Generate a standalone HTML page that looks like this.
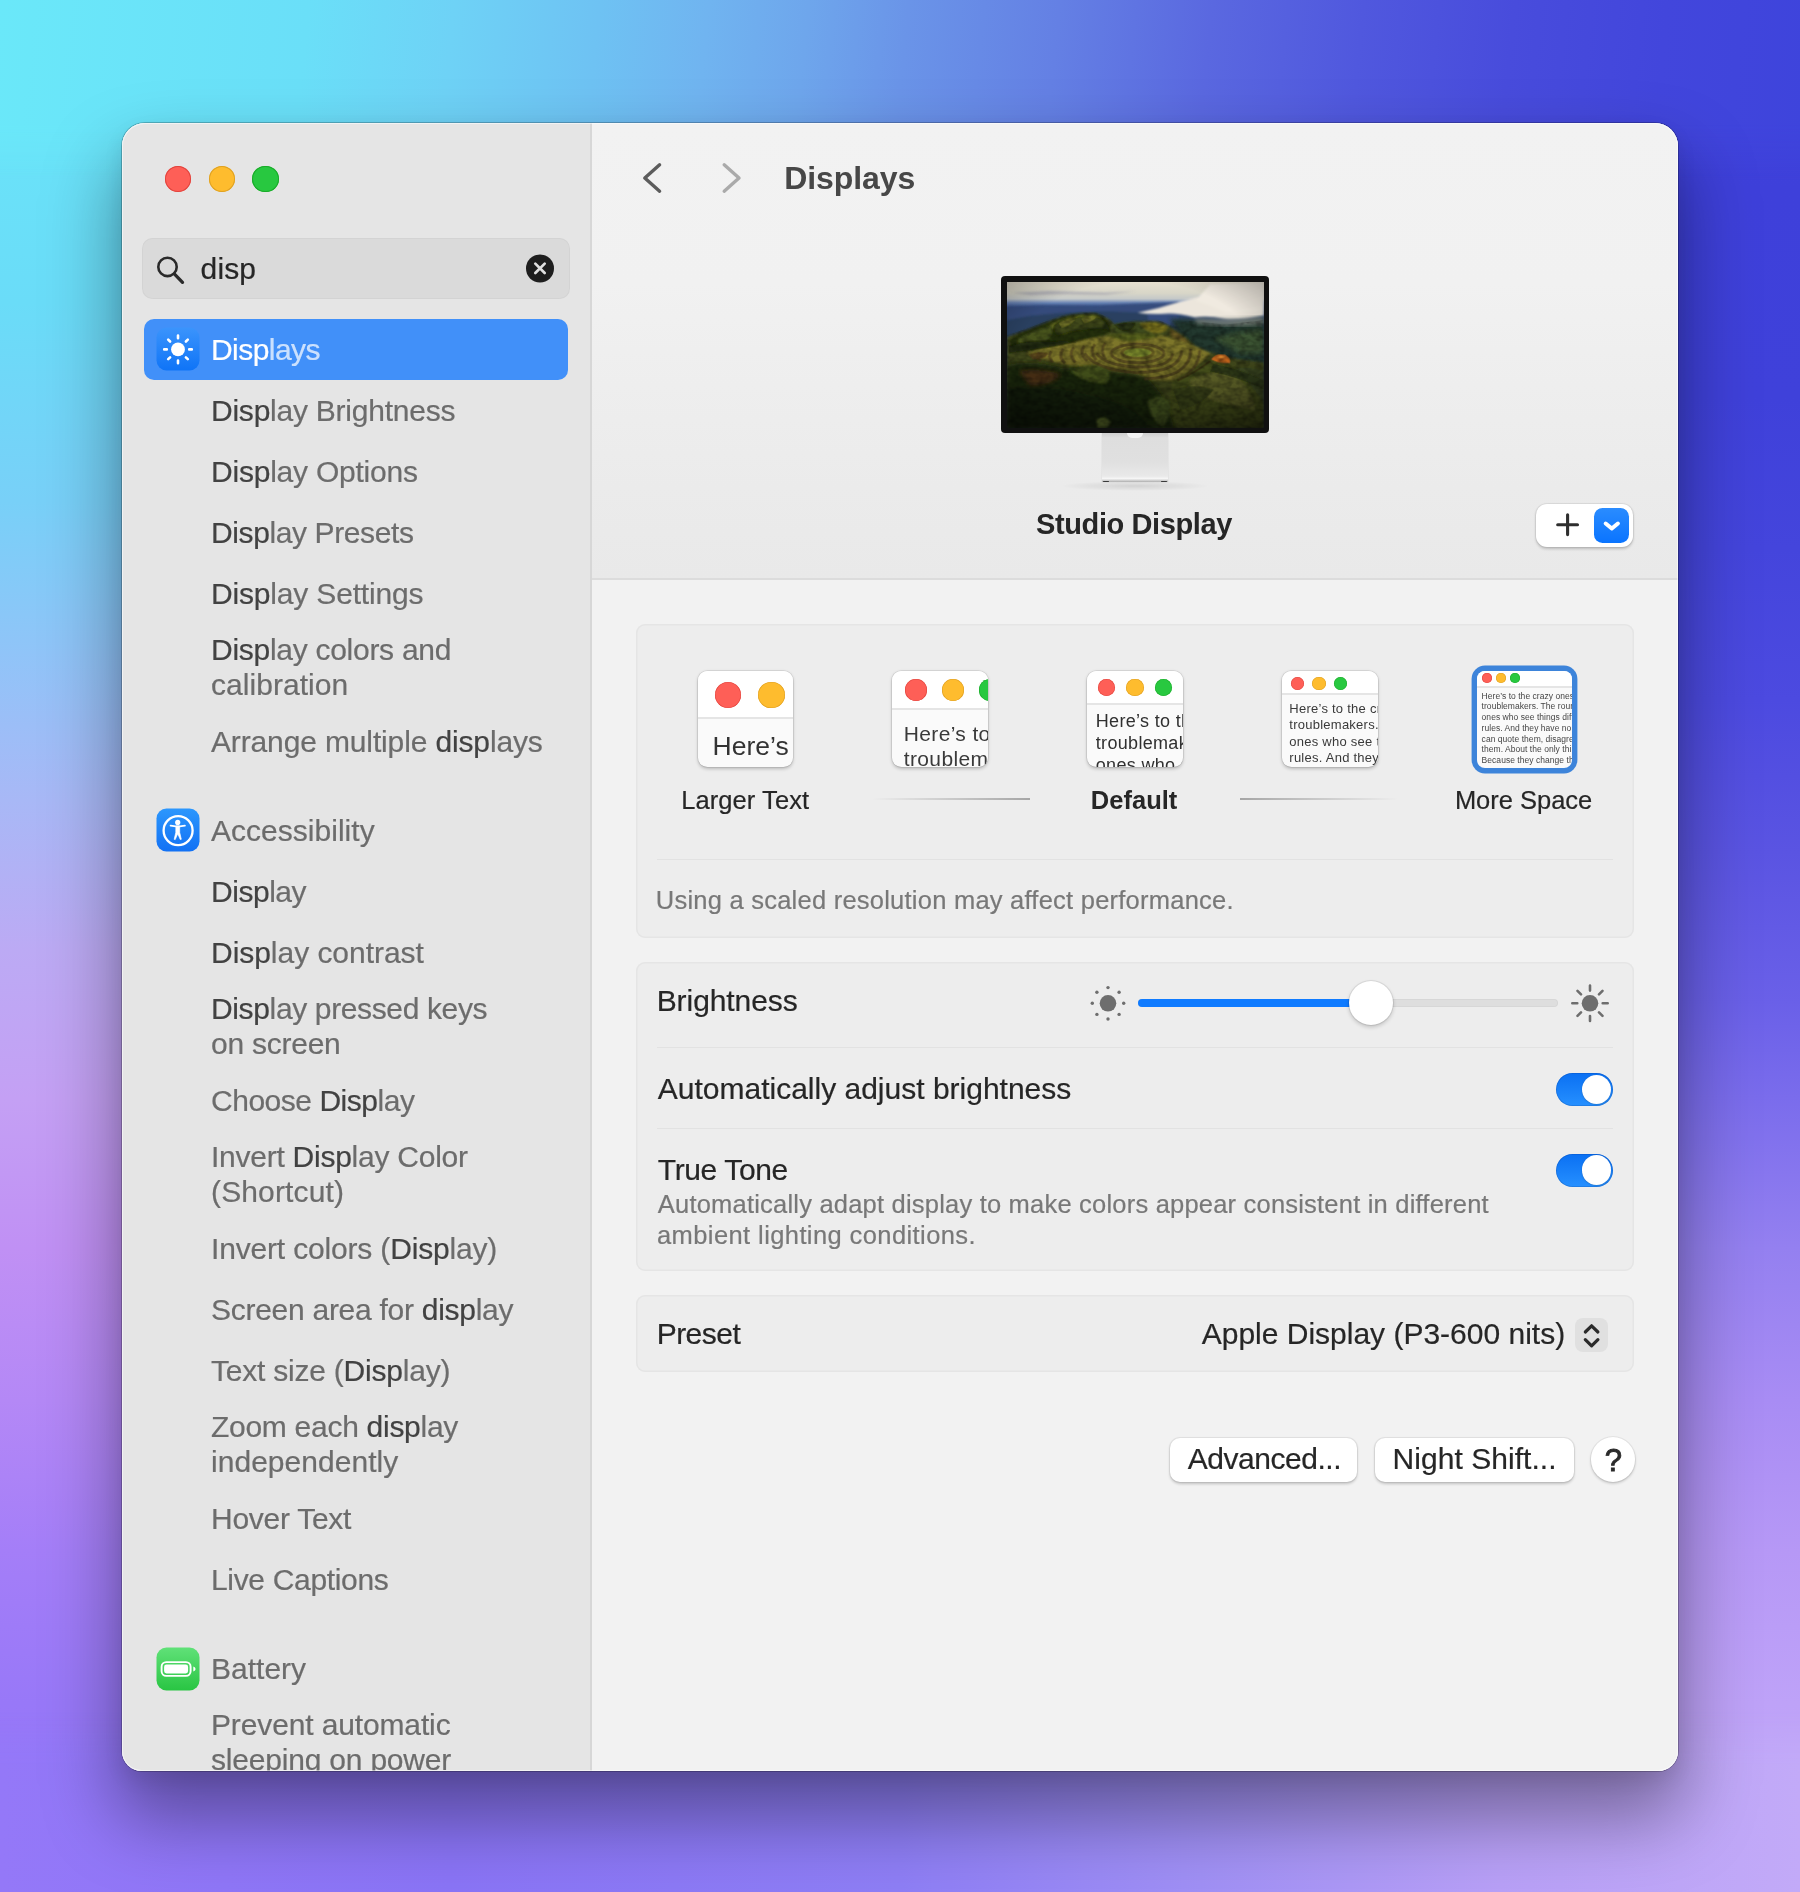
<!DOCTYPE html>
<html><head><meta charset="utf-8"><title>Displays</title>
<style>
html,body{margin:0;padding:0}
body{width:1800px;height:1892px;overflow:hidden;position:relative;font-family:"Liberation Sans",sans-serif;background:#8c78f0}
.bgA,.bgB,.bgT,.bgBt{position:absolute;left:0;top:0;width:1800px;height:1892px}
.bgA{background:linear-gradient(to bottom,#6ae8f9 0%,#6adcf8 16%,#78d0f8 26.5%,#90c4f8 34.5%,#a8b8f6 42.3%,#bcaaf4 50.2%,#c4a0f4 58.1%,#c090f4 66%,#b488f6 74%,#a47ef8 82%,#9878f8 90%,#9277f8 100%)}
.bgB{background:linear-gradient(to bottom,#4244dc 0%,#3e40da 10%,#3f41da 21%,#4445dc 29%,#4c4ae0 37%,#5a54e2 45%,#6a60e8 53%,#7a6cec 58%,#9480f0 66%,#a88cf4 74%,#b698f6 82%,#bea2f8 90%,#c2aaf8 100%);
 -webkit-mask-image:linear-gradient(to right,transparent 6%,rgba(0,0,0,.5) 50%,#000 94%);mask-image:linear-gradient(to right,transparent 6%,rgba(0,0,0,.5) 50%,#000 94%)}
.bgT{height:180px;background:linear-gradient(96deg,#6ae8f9 0%,#6adff8 17%,#6ed2f6 25%,#6ec2f3 33%,#70b4f0 39%,#6ea6ec 44.5%,#6a94e8 50%,#6480e4 58.3%,#5a68e0 66.7%,#5058de 75%,#484cdc 83.3%,#4246dc 91.7%,#3e44dc 100%);
 -webkit-mask-image:linear-gradient(to bottom,#000 0,#000 125px,transparent 180px);mask-image:linear-gradient(to bottom,#000 0,#000 125px,transparent 180px)}
.bgBt{top:1712px;height:180px;background:linear-gradient(to right,#9478f8 0%,#8a74f6 25%,#8e7ef5 50%,#a090f5 66.7%,#b8a0f7 83.3%,#c2aaf8 100%);
 -webkit-mask-image:linear-gradient(to top,#000 0,#000 125px,transparent 180px);mask-image:linear-gradient(to top,#000 0,#000 125px,transparent 180px)}
.win{position:absolute;left:122px;top:123px;width:1556px;height:1648px;border-radius:23px 23px 20px 20px;
 box-shadow:0 0 0 1px rgba(0,0,0,.22),0 42px 72px 6px rgba(0,0,0,.37),0 8px 20px rgba(0,0,0,.08)}
.clip{position:absolute;left:0;top:0;width:1556px;height:1648px;border-radius:23px 23px 20px 20px;overflow:hidden;background:#f2f2f2}
.hl{position:absolute;left:0;top:0;width:1556px;height:1648px;border-radius:23px 23px 20px 20px;box-shadow:inset 0 0 0 1px rgba(255,255,255,.55);pointer-events:none}
.pg{position:absolute;left:-122px;top:-123px;width:1800px;height:1892px;will-change:transform}
.t{position:absolute;white-space:pre;line-height:1em}
.r{-webkit-text-stroke:0.2px}
.a{position:absolute}
.panel{position:absolute;left:636px;width:998px;background:#ededed;border-radius:9px;box-shadow:inset 0 0 0 1.5px #e5e5e5}
.hr{position:absolute;height:1.6px;background:#e2e2e2}
.tl{position:absolute;border-radius:50%}
.thumb{position:absolute;width:96px;height:96px;border-radius:9.5px;background:#fafafa;overflow:hidden;
  box-shadow:0 0 0 .8px rgba(0,0,0,.09),0 1.5px 3.5px rgba(0,0,0,.22)}
.thumb .bar{position:absolute;left:0;top:0;width:100%;background:#fff;border-bottom:2px solid #e5e5e5}
.thumb .d{position:absolute;border-radius:50%}
.thumb .tx{position:absolute;white-space:pre;color:#3c3c3c}
.btn{position:absolute;background:#fff;border-radius:10px;box-shadow:0 0 0 1px rgba(0,0,0,.05),0 1.5px 3px rgba(0,0,0,.20)}
.tog{position:absolute;width:57.2px;height:33.2px;border-radius:17px;background:linear-gradient(to bottom,#0a70f3,#2690ff);box-shadow:inset 0 0 0 .8px rgba(0,40,120,.22)}
.tog i{position:absolute;right:1.7px;top:1.9px;width:29.5px;height:29.5px;border-radius:50%;background:#fff;box-shadow:0 .5px 1.5px rgba(0,0,0,.25)}
</style></head><body>
<div class="bgA"></div><div class="bgB"></div><div class="bgT"></div><div class="bgBt"></div>
<div class="win"><div class="clip"><div class="pg">
<div class="a" style="left:122px;top:123px;width:469px;height:1648px;background:#e5e5e5"></div>
<div class="a" style="left:590px;top:123px;width:1.6px;height:1648px;background:#d7d7d7"></div>
<div class="tl" style="left:165.1px;top:165.6px;width:26.4px;height:26.4px;background:#fe5f57;box-shadow:inset 0 0 0 1px #e0443e"></div>
<div class="tl" style="left:208.7px;top:165.6px;width:26.4px;height:26.4px;background:#febc2e;box-shadow:inset 0 0 0 1px #dea123"></div>
<div class="tl" style="left:252.3px;top:165.6px;width:26.4px;height:26.4px;background:#28c840;box-shadow:inset 0 0 0 1px #1aab29"></div>
<div class="a" style="left:142px;top:238.2px;width:428.2px;height:60.4px;border-radius:10.5px;background:#dadada;box-shadow:inset 0 0 0 1px rgba(0,0,0,.03)"></div>
<svg class="a" style="left:150px;top:250px" width="40" height="40" viewBox="0 0 40 40"><circle cx="17.5" cy="16.9" r="9.2" fill="none" stroke="#2a2a2a" stroke-width="2.6"/><path d="M24.3 23.9 L32.5 32.3" stroke="#2a2a2a" stroke-width="3.3" stroke-linecap="round"/></svg>
<div class="t r" style="left:200.60px;top:254.00px;font-size:30px;letter-spacing:0.138px;font-weight:400;"><span style="color:#262626">disp</span></div>
<svg class="a" style="left:525px;top:254px" width="30" height="30" viewBox="0 0 30 30"><circle cx="15" cy="14.5" r="14" fill="#1e1e1e"/><path d="M10.3 9.6 L19.7 19 M19.7 9.6 L10.3 19" stroke="#e0e0e0" stroke-width="2.7" stroke-linecap="round"/></svg>
<div class="a" style="left:144px;top:318.8px;width:424px;height:61px;border-radius:10px;background:#4190f9"></div>
<svg class="a" style="left:156.3px;top:327.3px" width="44" height="46" viewBox="0 0 44 46">
<defs><linearGradient id="gb" x1="0" y1="0" x2="0" y2="1"><stop offset="0" stop-color="#3b94fc"/><stop offset="1" stop-color="#0f74f7"/></linearGradient></defs>
<rect x="0.5" y="0.5" width="43" height="43" rx="10" fill="url(#gb)"/>
<circle cx="22" cy="22.4" r="6.9" fill="#fff"/>
<g stroke="#fff" stroke-width="2.6" stroke-linecap="round">
<path d="M22 8.6v2.6M22 33.6v2.6M8.2 22.4h2.6M33.2 22.4h2.6M12.2 12.6l1.9 1.9M29.9 30.3l1.9 1.9M31.8 12.6l-1.9 1.9M14.1 30.3l-1.9 1.9"/></g></svg>
<div class="t r" style="left:211.00px;top:335.00px;font-size:30px;letter-spacing:-0.547px;font-weight:400;"><span style="color:#ffffff">Disp</span><span style="color:rgba(255,255,255,.72)">lays</span></div>
<div class="t r" style="left:211.00px;top:396.00px;font-size:30px;letter-spacing:-0.235px;font-weight:400;"><span style="color:#424242">Disp</span><span style="color:#6c6c6c">lay Brightness</span></div>
<div class="t r" style="left:211.00px;top:457.00px;font-size:30px;letter-spacing:-0.226px;font-weight:400;"><span style="color:#424242">Disp</span><span style="color:#6c6c6c">lay Options</span></div>
<div class="t r" style="left:211.00px;top:518.00px;font-size:30px;letter-spacing:-0.394px;font-weight:400;"><span style="color:#424242">Disp</span><span style="color:#6c6c6c">lay Presets</span></div>
<div class="t r" style="left:211.00px;top:579.00px;font-size:30px;letter-spacing:-0.176px;font-weight:400;"><span style="color:#424242">Disp</span><span style="color:#6c6c6c">lay Settings</span></div>
<div class="t r" style="left:211.00px;top:635.00px;font-size:30px;letter-spacing:-0.279px;font-weight:400;"><span style="color:#424242">Disp</span><span style="color:#6c6c6c">lay colors and</span></div>
<div class="t r" style="left:211.00px;top:670.00px;font-size:30px;letter-spacing:0.050px;font-weight:400;"><span style="color:#6c6c6c">calibration</span></div>
<div class="t r" style="left:211.00px;top:727.00px;font-size:30px;letter-spacing:-0.138px;font-weight:400;"><span style="color:#6c6c6c">Arrange multiple </span><span style="color:#424242">disp</span><span style="color:#6c6c6c">lays</span></div>
<div class="t r" style="left:211.00px;top:816.00px;font-size:30px;letter-spacing:0.025px;font-weight:400;"><span style="color:#6c6c6c">Accessibility</span></div>
<div class="t r" style="left:211.00px;top:877.00px;font-size:30px;letter-spacing:-0.468px;font-weight:400;"><span style="color:#424242">Disp</span><span style="color:#6c6c6c">lay</span></div>
<div class="t r" style="left:211.00px;top:938.00px;font-size:30px;letter-spacing:-0.039px;font-weight:400;"><span style="color:#424242">Disp</span><span style="color:#6c6c6c">lay contrast</span></div>
<div class="t r" style="left:211.00px;top:994.00px;font-size:30px;letter-spacing:-0.363px;font-weight:400;"><span style="color:#424242">Disp</span><span style="color:#6c6c6c">lay pressed keys</span></div>
<div class="t r" style="left:211.00px;top:1029.00px;font-size:30px;letter-spacing:-0.250px;font-weight:400;"><span style="color:#6c6c6c">on screen</span></div>
<div class="t r" style="left:211.00px;top:1086.00px;font-size:30px;letter-spacing:-0.479px;font-weight:400;"><span style="color:#6c6c6c">Choose </span><span style="color:#424242">Disp</span><span style="color:#6c6c6c">lay</span></div>
<div class="t r" style="left:211.00px;top:1142.00px;font-size:30px;letter-spacing:-0.253px;font-weight:400;"><span style="color:#6c6c6c">Invert </span><span style="color:#424242">Disp</span><span style="color:#6c6c6c">lay Color</span></div>
<div class="t r" style="left:211.00px;top:1177.00px;font-size:30px;letter-spacing:0.138px;font-weight:400;"><span style="color:#6c6c6c">(Shortcut)</span></div>
<div class="t r" style="left:211.00px;top:1234.00px;font-size:30px;letter-spacing:-0.169px;font-weight:400;"><span style="color:#6c6c6c">Invert colors (</span><span style="color:#424242">Disp</span><span style="color:#6c6c6c">lay)</span></div>
<div class="t r" style="left:211.00px;top:1295.00px;font-size:30px;letter-spacing:-0.274px;font-weight:400;"><span style="color:#6c6c6c">Screen area for </span><span style="color:#424242">disp</span><span style="color:#6c6c6c">lay</span></div>
<div class="t r" style="left:211.00px;top:1356.00px;font-size:30px;letter-spacing:-0.221px;font-weight:400;"><span style="color:#6c6c6c">Text size (</span><span style="color:#424242">Disp</span><span style="color:#6c6c6c">lay)</span></div>
<div class="t r" style="left:211.00px;top:1412.00px;font-size:30px;letter-spacing:-0.282px;font-weight:400;"><span style="color:#6c6c6c">Zoom each </span><span style="color:#424242">disp</span><span style="color:#6c6c6c">lay</span></div>
<div class="t r" style="left:211.00px;top:1447.00px;font-size:30px;letter-spacing:0.036px;font-weight:400;"><span style="color:#6c6c6c">independently</span></div>
<div class="t r" style="left:211.00px;top:1504.00px;font-size:30px;letter-spacing:-0.274px;font-weight:400;"><span style="color:#6c6c6c">Hover Text</span></div>
<div class="t r" style="left:211.00px;top:1565.00px;font-size:30px;letter-spacing:-0.329px;font-weight:400;"><span style="color:#6c6c6c">Live Captions</span></div>
<div class="t r" style="left:211.00px;top:1654.00px;font-size:30px;letter-spacing:0.008px;font-weight:400;"><span style="color:#6c6c6c">Battery</span></div>
<div class="t r" style="left:211.00px;top:1710.00px;font-size:30px;letter-spacing:-0.135px;font-weight:400;"><span style="color:#6c6c6c">Prevent automatic</span></div>
<div class="t r" style="left:211.00px;top:1745.00px;font-size:30px;letter-spacing:-0.201px;font-weight:400;"><span style="color:#6c6c6c">sleeping on power</span></div>
<svg class="a" style="left:156.2px;top:808.1px" width="44" height="46" viewBox="0 0 44 46">
<defs><linearGradient id="gb2" x1="0" y1="0" x2="0" y2="1"><stop offset="0" stop-color="#2c97fd"/><stop offset="1" stop-color="#1271f4"/></linearGradient></defs>
<rect x="0.5" y="0.5" width="43" height="43" rx="10" fill="url(#gb2)"/>
<circle cx="22.1" cy="22.6" r="14.5" fill="none" stroke="#fff" stroke-width="2.3"/>
<circle cx="21.7" cy="14.4" r="2.6" fill="#fff"/>
<path d="M14.6 17.6 L19.8 18.4 L23.7 18.4 L28.9 17.6" fill="none" stroke="#fff" stroke-width="1.8" stroke-linecap="round" stroke-linejoin="round"/>
<path d="M19.9 18 L23.6 18 L23.7 24.6 L25.3 31.3 L24.3 31.6 L21.75 25.8 L19.2 31.6 L18.2 31.3 L19.8 24.6Z" fill="#fff" stroke="#fff" stroke-width=".7" stroke-linejoin="round"/>
</svg>
<svg class="a" style="left:156.4px;top:1646.6px" width="44" height="46" viewBox="0 0 44 46">
<defs><linearGradient id="gg" x1="0" y1="0" x2="0" y2="1"><stop offset="0" stop-color="#60e178"/><stop offset="1" stop-color="#29c543"/></linearGradient></defs>
<rect x="0.5" y="0.5" width="43" height="43" rx="10" fill="url(#gg)"/>
<rect x="5.6" y="15.1" width="29" height="13.8" rx="4.6" fill="none" stroke="#fff" stroke-width="1.9"/>
<rect x="8.1" y="17.6" width="24" height="8.8" rx="2.4" fill="#fff"/>
<path d="M37.3 19.6 q2.3 0.6 2.3 2.4 q0 1.8 -2.3 2.4z" fill="#fff"/>
</svg>
<div class="a" style="left:592px;top:123px;width:1086px;height:456px;background:linear-gradient(to bottom,#f2f2f2 0%,#f1f1f1 35%,#ebebeb 80%,#e9e9e9 100%)"></div>
<div class="a" style="left:592px;top:578px;width:1086px;height:2px;background:#dcdcdc"></div>
<div class="a" style="left:592px;top:580px;width:1086px;height:1191px;background:#f2f2f2"></div>
<svg class="a" style="left:636px;top:156px" width="120" height="44" viewBox="0 0 120 44">
<path d="M23.6 8.8 L8.8 22 L23.6 35.2" fill="none" stroke="#5c5c5c" stroke-width="3.4" stroke-linecap="round" stroke-linejoin="round"/>
<path d="M88.2 8.8 L103 22 L88.2 35.2" fill="none" stroke="#aaaaaa" stroke-width="3.4" stroke-linecap="round" stroke-linejoin="round"/>
</svg>
<div class="t" style="left:784.20px;top:162.00px;font-size:32px;letter-spacing:-0.078px;font-weight:700;"><span style="color:#474747">Displays</span></div>
<div class="a" style="left:1001px;top:276px;width:268px;height:157px;background:#101010;border-radius:4px"></div>
<svg class="a" style="left:1006.7px;top:281.7px" width="257" height="146.4" viewBox="45 45 1713 975" preserveAspectRatio="none">
<defs>
<linearGradient id="wsky" x1="0" y1="45" x2="0" y2="420" gradientUnits="userSpaceOnUse"><stop offset="0" stop-color="#e6e0d0"/><stop offset="0.2" stop-color="#d8d6c8"/><stop offset="0.3" stop-color="#c4c8c8"/><stop offset="0.37" stop-color="#6a84b4"/><stop offset="0.45" stop-color="#38528a"/><stop offset="0.7" stop-color="#2c4060"/><stop offset="1" stop-color="#243646"/></linearGradient>
<filter id="wb1" x="-5%" y="-5%" width="110%" height="110%"><feGaussianBlur stdDeviation="4.5"/></filter>
<filter id="wb2" x="-5%" y="-5%" width="110%" height="110%"><feGaussianBlur stdDeviation="7"/></filter>
<filter id="wb3" x="-5%" y="-5%" width="110%" height="110%"><feGaussianBlur stdDeviation="14"/></filter>
<filter id="wn" x="0" y="0" width="100%" height="100%"><feTurbulence type="fractalNoise" baseFrequency="0.02 0.028" numOctaves="2" seed="7" result="n"/><feColorMatrix in="n" type="matrix" values="0 0 0 0 0  0 0 0 0 0  0 0 0 0 0  1.5 1.0 0 0 -0.95"/></filter>
<linearGradient id="wvig" x1="0" y1="45" x2="0" y2="1020" gradientUnits="userSpaceOnUse"><stop offset="0.5" stop-color="#000" stop-opacity="0"/><stop offset="1" stop-color="#000" stop-opacity=".38"/></linearGradient>
<radialGradient id="wvig2" cx="0.5" cy="0.45" r="0.75"><stop offset="0.6" stop-color="#000" stop-opacity="0"/><stop offset="1" stop-color="#000" stop-opacity=".35"/></radialGradient>
<clipPath id="wland"><path d="M45 400 Q200 350 340 295 Q480 235 640 250 Q740 285 760 325 Q900 295 960 305 Q1060 285 1130 335 L1130 300 L1300 308 L1500 328 L1758 298 L1758 1020 L45 1020Z"/></clipPath>
<clipPath id="wclip"><rect x="45" y="45" width="1713" height="975"/></clipPath>
</defs>
<g clip-path="url(#wclip)">
<rect x="45" y="45" width="1713" height="975" fill="url(#wsky)"/>
<g filter="url(#wb2)">
 <path d="M80 118 L330 104 L700 116 L900 108 L700 130 L420 128 L200 134Z" fill="#a9a9b2" opacity=".85"/>
 <path d="M45 212 L300 200 L640 204 L900 190 L1190 180 L1190 330 L45 420Z" fill="#344c7c"/>
 <path d="M45 300 L200 270 L420 250 L700 240 L980 250 L1000 420 L45 440Z" fill="#2c4060"/>
</g>
<g filter="url(#wb3)">
 <path d="M1130 290 L1300 300 L1500 320 L1758 290 L1758 620 L1500 560 L1250 470Z" fill="#24392e"/>
 <path d="M1420 420 L1600 380 L1758 360 L1758 520 L1600 520Z" fill="#3a5232"/>
</g>
<g filter="url(#wb2)">
 <path d="M1200 175 Q1400 120 1758 60 L1758 268 Q1600 300 1500 292 Q1380 268 1300 282 Q1180 250 1100 256 Q1000 262 915 250 Q1060 222 1200 175Z" fill="#ece6dc"/>
 <path d="M1400 60 L1758 45 L1758 240 L1500 250 Q1400 200 1300 170Z" fill="#f0eae0"/>
</g>
<g filter="url(#wb3)">
 <path d="M1300 285 Q1500 300 1758 270 L1758 330 Q1500 350 1300 320Z" fill="#8a9088" opacity=".7"/>
</g>
<!-- main land mass -->
<g filter="url(#wb2)">
 <path d="M45 410 Q200 360 340 300 Q480 240 640 255 Q740 290 760 330 Q900 300 960 310 Q1060 290 1130 340 Q1230 400 1300 470 Q1450 540 1600 560 L1758 580 L1758 1020 L45 1020Z" fill="#434a1c"/>
 <!-- terrace field -->
 <path d="M170 520 Q400 440 700 410 Q900 380 1060 400 Q1260 440 1400 520 Q1300 620 1150 700 Q900 700 700 640 Q400 600 170 520Z" fill="#7d7629"/>
 <path d="M700 395 Q900 370 1080 400 Q1000 430 860 440 Q760 430 700 395Z" fill="#56601f"/>
 <!-- tree clumps upper -->
 <path d="M60 430 Q180 360 330 310 Q470 250 640 255 Q740 300 735 380 Q640 420 520 440 Q300 480 80 500Z" fill="#27330f"/>
 <path d="M330 330 Q470 262 630 262 Q700 300 690 340 Q560 340 420 390 Q360 380 330 330Z" fill="#687022"/>
 <path d="M120 420 Q240 360 340 340 Q360 400 300 440 Q200 470 120 470Z" fill="#46521c"/>
 <path d="M740 330 Q860 300 960 312 Q1060 295 1130 345 Q1130 390 1040 395 Q900 380 760 390Z" fill="#3e4a1a"/>
 <path d="M930 320 Q1040 296 1120 345 Q1110 385 1030 388 Q960 370 930 320Z" fill="#77701f"/>
 <path d="M1130 360 Q1220 400 1260 450 Q1200 440 1140 410Z" fill="#6a5a20"/>
 <!-- right meadow -->
 <path d="M1150 700 Q1300 600 1420 580 Q1600 600 1758 680 L1758 1020 L1100 1020Z" fill="#4a521f"/>
 <path d="M1260 700 Q1400 620 1560 660 Q1680 760 1700 900 Q1500 860 1300 800Z" fill="#62662a"/>
 <path d="M1560 620 Q1680 600 1758 640 L1758 860 Q1700 760 1560 620Z" fill="#3c4a20"/>
</g>
<g filter="url(#wb3)">
 <!-- dark forest bottom -->
 <path d="M45 600 Q200 560 420 620 Q600 600 760 640 Q960 640 1010 720 Q1100 800 1160 1020 L45 1020Z" fill="#1f2c11"/>
 <path d="M45 760 Q300 720 600 800 Q900 860 1000 1020 L45 1020Z" fill="#17220d"/>
 <path d="M130 640 Q260 620 400 660 Q340 730 200 730Z" fill="#5a3418" opacity=".8"/>
</g>
<g filter="url(#wb2)">
 <path d="M470 640 Q560 580 700 610 Q760 680 700 720 Q560 720 470 640Z" fill="#46551f"/>
 <path d="M980 840 Q1060 780 1130 840 Q1140 960 1080 1010 Q1000 960 980 840Z" fill="#4a5a22"/>
 <path d="M640 960 Q700 930 740 980 L700 1020 L650 1020Z" fill="#5a6a2a"/>
</g>
<g filter="url(#wb1)">
 <path d="M360 330 Q420 280 470 300 Q520 262 580 285 Q640 262 700 300 Q735 340 730 372 Q640 350 560 372 Q460 372 380 410 Q340 380 360 330Z" fill="#1f2a0d" opacity=".55"/>
 <path d="M390 318 Q450 282 500 296 Q470 330 410 350Z M540 288 Q590 268 640 280 Q610 312 560 318Z" fill="#7a7c2a" opacity=".8"/>
 <path d="M760 330 Q820 312 900 318 Q900 360 840 372 Q790 372 760 330Z" fill="#1f2a0d" opacity=".6"/>
 <path d="M60 470 Q160 430 300 440 Q420 430 520 440 Q360 480 200 500 L60 520Z" fill="#1a240c" opacity=".7"/>
 <path d="M1420 590 Q1560 610 1758 700 L1758 760 Q1600 680 1400 640Z" fill="#2c3716" opacity=".8"/>
 <path d="M1150 760 Q1300 720 1420 760 Q1360 860 1200 900Z" fill="#3a4219" opacity=".8"/>
</g>
<!-- terrace lines -->
<g filter="url(#wb1)" fill="none" stroke="#46391a" stroke-width="19" opacity=".62">
 <ellipse cx="915" cy="515" rx="105" ry="36" stroke="#55481a"/>
 <ellipse cx="915" cy="520" rx="175" ry="62"/>
 <path d="M1150 520 Q1130 620 900 610 Q700 600 640 520"/>
 <path d="M1210 500 Q1200 650 900 648 Q640 630 560 520"/>
 <path d="M1270 490 Q1270 680 960 690"/>
 <path d="M1330 500 Q1320 640 1180 700"/>
 <path d="M560 470 Q520 520 580 570"/><path d="M490 480 Q450 530 500 580"/><path d="M420 490 Q380 540 430 585"/><path d="M340 505 Q310 540 350 580"/><path d="M260 515 Q230 545 270 575"/>
 <path d="M700 450 Q660 500 700 560"/><path d="M630 460 Q590 510 640 565"/>
 <path d="M1180 700 Q1280 660 1400 570" stroke="#33280f" stroke-width="12"/>
</g>
<g filter="url(#wb1)">
 <ellipse cx="915" cy="515" rx="92" ry="28" fill="#76842a"/>
 <path d="M1405 560 Q1440 515 1500 530 Q1545 560 1530 585 Q1460 590 1405 560Z" fill="#c4661f"/>
 <path d="M1440 548 Q1470 528 1500 545 Q1480 560 1440 548Z" fill="#e08a30"/>
 <path d="M190 530 Q250 505 320 520 Q300 560 220 560Z" fill="#5a3e1a" opacity=".7"/>
</g>
<g clip-path="url(#wland)"><rect x="45" y="45" width="1713" height="975" filter="url(#wn)" fill="#000" opacity=".42"/></g>
<rect x="45" y="45" width="1713" height="975" fill="url(#wvig)"/>
<rect x="45" y="45" width="1713" height="975" fill="url(#wvig2)"/>
</g>
</svg>

<div class="a" style="left:1102px;top:433px;width:66px;height:49px;background:linear-gradient(to bottom,#cfcfcf 0%,#dedede 10%,#e0e0e0 60%,#e9e9e9 88%,#f6f6f6 93%,#cfcfcf 97%,#b0b0b0 100%);box-shadow:0 0 0 .5px rgba(0,0,0,.06)"></div>
<div class="a" style="left:1126.5px;top:433px;width:16px;height:4.5px;border-radius:0 0 8px 8px;background:#f3f3f3"></div>
<div class="a" style="left:1102.6px;top:480.6px;width:6px;height:1.8px;background:#3a3a3a;border-radius:1px"></div><div class="a" style="left:1161.4px;top:480.6px;width:6px;height:1.8px;background:#3a3a3a;border-radius:1px"></div>
<div class="a" style="left:1060px;top:481px;width:150px;height:10px;border-radius:50%;background:radial-gradient(ellipse at center,rgba(0,0,0,.10),rgba(0,0,0,0) 70%)"></div>
<div class="t" style="left:1036.00px;top:510.00px;font-size:29px;letter-spacing:-0.387px;font-weight:700;"><span style="color:#262626">Studio Display</span></div>
<div class="btn" style="left:1536px;top:504px;width:97px;height:43px;border-radius:11px"></div>
<div class="a" style="left:1594px;top:508px;width:35px;height:35px;border-radius:8.5px;background:linear-gradient(to bottom,#2a8cff,#0a74ff)"></div>
<svg class="a" style="left:1550px;top:506px" width="84" height="40" viewBox="0 0 84 40">
<path d="M7.7 18.7h19.8M17.6 8.8v19.8" stroke="#2e2e2e" stroke-width="3.1" stroke-linecap="round"/>
<path d="M55.7 17.5 L61.8 22.5 L67.9 17.5" fill="none" stroke="#fff" stroke-width="4" stroke-linecap="round" stroke-linejoin="round"/>
</svg>
<div class="panel" style="top:624px;height:314px"></div>
<div class="thumb" style="left:697.7px;top:670.7px;width:95.6px;height:96.2px;border-radius:9.5px;"><div class="bar" style="height:46.2px"></div><div class="d" style="left:17.0px;top:11.0px;width:26.6px;height:26.6px;background:#fe5f57;box-shadow:inset 0 0 0 .6px #e2463f"></div><div class="d" style="left:60.7px;top:11.0px;width:26.6px;height:26.6px;background:#febc2e;box-shadow:inset 0 0 0 .6px #dfa023"></div><div class="tx" style="left:14.9px;top:62px;font-size:26.5px;line-height:1em;letter-spacing:0px;color:#333">Here’s to</div></div>
<div class="thumb" style="left:892.0px;top:670.7px;width:96px;height:96.2px;border-radius:9.5px;"><div class="bar" style="height:37.6px"></div><div class="d" style="left:13.3px;top:8.3px;width:21.6px;height:21.6px;background:#fe5f57;box-shadow:inset 0 0 0 .6px #e2463f"></div><div class="d" style="left:50.4px;top:8.3px;width:21.6px;height:21.6px;background:#febc2e;box-shadow:inset 0 0 0 .6px #dfa023"></div><div class="d" style="left:87.4px;top:8.3px;width:21.6px;height:21.6px;background:#28c840;box-shadow:inset 0 0 0 .6px #1dad2b"></div><div class="tx" style="left:11.8px;top:52px;font-size:21px;line-height:1em;letter-spacing:0.35px;color:#3a3a3a">Here’s to the</div><div class="tx" style="left:11.8px;top:77px;font-size:21px;line-height:1em;letter-spacing:0.35px;color:#3a3a3a">troublemakers</div></div>
<div class="thumb" style="left:1087.1px;top:670.7px;width:96px;height:96.2px;border-radius:9.5px;"><div class="bar" style="height:32.1px"></div><div class="d" style="left:10.8px;top:8.1px;width:17.6px;height:17.6px;background:#fe5f57;box-shadow:inset 0 0 0 .6px #e2463f"></div><div class="d" style="left:39.2px;top:8.1px;width:17.6px;height:17.6px;background:#febc2e;box-shadow:inset 0 0 0 .6px #dfa023"></div><div class="d" style="left:67.6px;top:8.1px;width:17.6px;height:17.6px;background:#28c840;box-shadow:inset 0 0 0 .6px #1dad2b"></div><div class="tx" style="left:8.7px;top:41px;font-size:18px;line-height:1em;letter-spacing:0.32px;color:#303030">Here’s to the</div><div class="tx" style="left:8.7px;top:63px;font-size:18px;line-height:1em;letter-spacing:0.32px;color:#303030">troublemakers</div><div class="tx" style="left:8.7px;top:85px;font-size:18px;line-height:1em;letter-spacing:0.32px;color:#303030">ones who see</div></div>
<div class="thumb" style="left:1282.0px;top:670.7px;width:96px;height:96.2px;border-radius:9.5px;"><div class="bar" style="height:22.5px"></div><div class="d" style="left:8.5px;top:5.9px;width:13.6px;height:13.6px;background:#fe5f57;box-shadow:inset 0 0 0 .6px #e2463f"></div><div class="d" style="left:30.0px;top:5.9px;width:13.6px;height:13.6px;background:#febc2e;box-shadow:inset 0 0 0 .6px #dfa023"></div><div class="d" style="left:51.6px;top:5.9px;width:13.6px;height:13.6px;background:#28c840;box-shadow:inset 0 0 0 .6px #1dad2b"></div><div class="tx" style="left:7.3px;top:31px;font-size:13px;line-height:1em;letter-spacing:0.25px;color:#3a3a3a">Here’s to the crazy</div><div class="tx" style="left:7.3px;top:47px;font-size:13px;line-height:1em;letter-spacing:0.25px;color:#3a3a3a">troublemakers. The</div><div class="tx" style="left:7.3px;top:64px;font-size:13px;line-height:1em;letter-spacing:0.25px;color:#3a3a3a">ones who see things</div><div class="tx" style="left:7.3px;top:80px;font-size:13px;line-height:1em;letter-spacing:0.25px;color:#3a3a3a">rules. And they have</div></div>
<div class="thumb" style="left:1476.6px;top:671.4px;width:95.9px;height:96.3px;border-radius:8px;box-shadow:0 0 0 5.4px #3d84da;"><div class="bar" style="height:14.2px"></div><div class="d" style="left:5.4px;top:2.0px;width:9.8px;height:9.8px;background:#fe5f57;box-shadow:inset 0 0 0 .6px #e2463f"></div><div class="d" style="left:19.5px;top:2.0px;width:9.8px;height:9.8px;background:#febc2e;box-shadow:inset 0 0 0 .6px #dfa023"></div><div class="d" style="left:33.8px;top:2.0px;width:9.8px;height:9.8px;background:#28c840;box-shadow:inset 0 0 0 .6px #1dad2b"></div><div class="tx" style="left:5.0px;top:21px;font-size:8.5px;line-height:1em;letter-spacing:0.04px;color:#454545">Here’s to the crazy ones</div><div class="tx" style="left:5.0px;top:31px;font-size:8.5px;line-height:1em;letter-spacing:0.04px;color:#454545">troublemakers. The round</div><div class="tx" style="left:5.0px;top:42px;font-size:8.5px;line-height:1em;letter-spacing:0.04px;color:#454545">ones who see things differ</div><div class="tx" style="left:5.0px;top:53px;font-size:8.5px;line-height:1em;letter-spacing:0.04px;color:#454545">rules. And they have no re</div><div class="tx" style="left:5.0px;top:64px;font-size:8.5px;line-height:1em;letter-spacing:0.04px;color:#454545">can quote them, disagree</div><div class="tx" style="left:5.0px;top:74px;font-size:8.5px;line-height:1em;letter-spacing:0.04px;color:#454545">them. About the only thing</div><div class="tx" style="left:5.0px;top:85px;font-size:8.5px;line-height:1em;letter-spacing:0.04px;color:#454545">Because they change thing</div></div>
<div class="t r" style="left:681.20px;top:788.00px;font-size:25.5px;letter-spacing:0.081px;font-weight:400;"><span style="color:#262626">Larger Text</span></div>
<div class="t" style="left:1090.85px;top:788.00px;font-size:25.5px;letter-spacing:0.009px;font-weight:700;"><span style="color:#262626">Default</span></div>
<div class="t r" style="left:1454.90px;top:788.00px;font-size:25.5px;letter-spacing:-0.010px;font-weight:400;"><span style="color:#262626">More Space</span></div>
<div class="a" style="left:872px;top:797.5px;width:158px;height:2px;background:linear-gradient(to right,rgba(0,0,0,0) 0%,rgba(0,0,0,.12) 40%,rgba(0,0,0,.30) 100%)"></div>
<div class="a" style="left:1240px;top:797.5px;width:158px;height:2px;background:linear-gradient(to left,rgba(0,0,0,0) 0%,rgba(0,0,0,.12) 40%,rgba(0,0,0,.30) 100%)"></div>
<div class="hr" style="left:657px;top:858.9px;width:956px"></div>
<div class="t r" style="left:655.80px;top:888.00px;font-size:25.5px;letter-spacing:0.235px;font-weight:400;"><span style="color:#787878">Using a scaled resolution may affect performance.</span></div>
<div class="panel" style="top:962px;height:309px"></div>
<div class="t r" style="left:656.70px;top:986.00px;font-size:30px;letter-spacing:-0.075px;font-weight:400;"><span style="color:#262626">Brightness</span></div>
<div class="a" style="left:1138px;top:998.5px;width:420px;height:8px;border-radius:4px;background:#dedede;box-shadow:inset 0 0 0 1px rgba(0,0,0,.03)"></div>
<div class="a" style="left:1138px;top:998.5px;width:236px;height:8px;border-radius:4px;background:#0f7bff"></div>
<div class="a" style="left:1349px;top:980.5px;width:44px;height:44px;border-radius:50%;background:#fff;box-shadow:0 0 0 1px rgba(0,0,0,.07),0 2px 4px rgba(0,0,0,.20)"></div>
<svg class="a" style="left:1088px;top:983px" width="40" height="40" viewBox="0 0 40 40"><circle cx="20" cy="20.3" r="8.3" fill="#6e6e6e"/>
<g fill="#6e6e6e"><circle cx="20" cy="4.6" r="1.7"/><circle cx="20" cy="36" r="1.7"/><circle cx="4.3" cy="20.3" r="1.7"/><circle cx="35.7" cy="20.3" r="1.7"/><circle cx="8.9" cy="9.2" r="1.7"/><circle cx="31.1" cy="9.2" r="1.7"/><circle cx="8.9" cy="31.4" r="1.7"/><circle cx="31.1" cy="31.4" r="1.7"/></g></svg>
<svg class="a" style="left:1567.6px;top:981px" width="44" height="44" viewBox="0 0 44 44"><circle cx="22" cy="22.3" r="8.3" fill="#6e6e6e"/>
<g stroke="#6e6e6e" stroke-width="2.6" stroke-linecap="round"><path d="M22 4.6v5M22 35v5M4.3 22.3h5M34.7 22.3h5M9.5 9.8l3.5 3.5M31 31.3l3.5 3.5M34.5 9.8l-3.5 3.5M13 31.3l-3.5 3.5"/></g></svg>
<div class="hr" style="left:657px;top:1046.9px;width:956px"></div>
<div class="t r" style="left:657.80px;top:1074.00px;font-size:30px;letter-spacing:-0.002px;font-weight:400;"><span style="color:#262626">Automatically adjust brightness</span></div>
<div class="tog" style="left:1555.6px;top:1072.8px"><i></i></div>
<div class="hr" style="left:657px;top:1127.9px;width:956px"></div>
<div class="t r" style="left:657.80px;top:1155.00px;font-size:30px;letter-spacing:-0.380px;font-weight:400;"><span style="color:#262626">True Tone</span></div>
<div class="tog" style="left:1555.6px;top:1153.6px"><i></i></div>
<div class="t r" style="left:657.80px;top:1192.00px;font-size:25.5px;letter-spacing:0.206px;font-weight:400;"><span style="color:#787878">Automatically adapt display to make colors appear consistent in different</span></div>
<div class="t r" style="left:657.00px;top:1223.00px;font-size:25.5px;letter-spacing:0.407px;font-weight:400;"><span style="color:#787878">ambient lighting conditions.</span></div>
<div class="panel" style="top:1295px;height:77px"></div>
<div class="t r" style="left:656.70px;top:1319.00px;font-size:30px;letter-spacing:-0.536px;font-weight:400;"><span style="color:#262626">Preset</span></div>
<div class="t r" style="left:1201.70px;top:1319.00px;font-size:30px;letter-spacing:-0.001px;font-weight:400;"><span style="color:#262626">Apple Display (P3-600 nits)</span></div>
<div class="a" style="left:1575px;top:1317.5px;width:33px;height:34px;border-radius:8px;background:#e0e0e0"></div>
<svg class="a" style="left:1575px;top:1317.7px" width="34" height="36" viewBox="0 0 34 36"><path d="M10.3 14 L16.6 7.8 L22.9 14 M10.3 21.6 L16.6 27.8 L22.9 21.6" fill="none" stroke="#2a2a2a" stroke-width="3.2" stroke-linecap="round" stroke-linejoin="round"/></svg>
<div class="btn" style="left:1170px;top:1438px;width:187px;height:44px"></div>
<div class="t r" style="left:1187.70px;top:1444.00px;font-size:30px;letter-spacing:-0.458px;font-weight:400;"><span style="color:#262626">Advanced...</span></div>
<div class="btn" style="left:1375px;top:1438px;width:199px;height:44px"></div>
<div class="t r" style="left:1392.60px;top:1444.00px;font-size:30px;letter-spacing:0.042px;font-weight:400;"><span style="color:#262626">Night Shift...</span></div>
<div class="btn" style="left:1590.6px;top:1437.2px;width:44.4px;height:44.4px;border-radius:50%"></div>
<div class="t" style="left:1604.67px;top:1445.00px;font-size:31px;letter-spacing:0.000px;font-weight:400;-webkit-text-stroke:0.9px #2a2a2a;"><span style="color:#2a2a2a">?</span></div>
</div></div><div class="hl"></div></div>
</body></html>
